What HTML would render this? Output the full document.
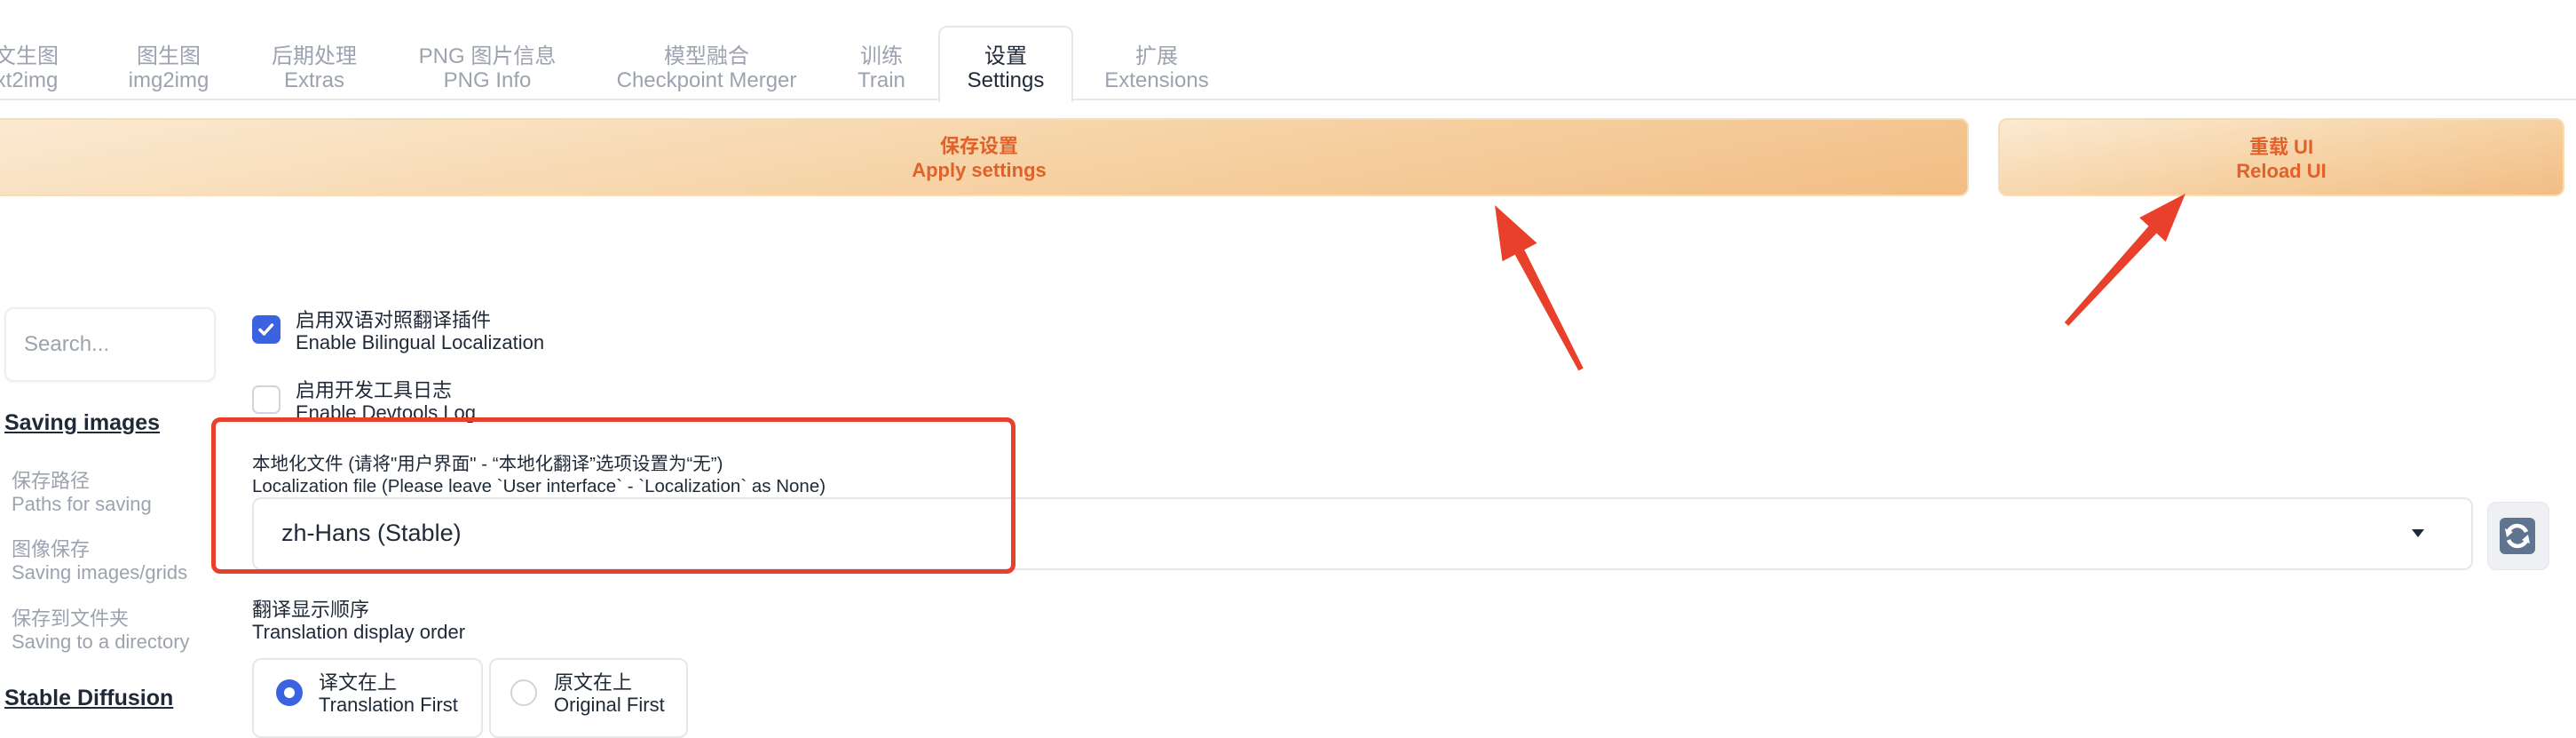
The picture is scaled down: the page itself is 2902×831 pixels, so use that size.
<!DOCTYPE html>
<html><head><meta charset="utf-8"><style>
*{margin:0;padding:0;box-sizing:border-box}
body{width:2902px;height:812px;overflow:hidden;background:#fff;position:relative;font-family:"Liberation Sans","Noto Sans CJK SC",sans-serif;color:#1f2937}
.a{position:absolute;white-space:nowrap}
.tab{position:absolute;top:50px;text-align:center;color:#9ca3af;font-size:24px;line-height:27px;transform:translateX(-50%)}
.btn{position:absolute;border:2px solid #f8dcb4;border-radius:10px;background:linear-gradient(170deg,#fbead2 0%,#f6d2a4 55%,#f2bd84 100%);color:#e0622a;font-weight:bold;font-size:22px;line-height:27px;text-align:center}
.nav{position:absolute;left:13px;color:#9ca3af;font-size:22px;line-height:26px}
.lbl{font-size:22px;line-height:25px;color:#1f2937}
</style></head><body>
<div class="tab" style="left:30px">文生图<br>xt2img</div>
<div class="tab" style="left:190px">图生图<br>img2img</div>
<div class="tab" style="left:354px">后期处理<br>Extras</div>
<div class="tab" style="left:549px">PNG 图片信息<br>PNG Info</div>
<div class="tab" style="left:796px">模型融合<br>Checkpoint Merger</div>
<div class="tab" style="left:993px">训练<br>Train</div>
<div class="a" style="left:1057px;top:29px;width:152px;height:86px;border:2px solid #e5e7eb;border-bottom:none;border-radius:10px 10px 0 0;background:#fff;z-index:2"></div>
<div class="tab" style="left:1133px;color:#1f2937;z-index:3">设置<br>Settings</div>
<div class="tab" style="left:1303px">扩展<br>Extensions</div>
<div class="a" style="left:0;top:111px;width:2902px;height:2px;background:#e5e7eb;z-index:1"></div>
<div class="a" style="left:1059px;top:110px;width:148px;height:4px;background:#fff;z-index:2"></div>

<div class="btn" style="left:-12px;top:133px;width:2230px;height:88px;padding-top:16px">保存设置<br>Apply settings</div>
<div class="btn" style="left:2251px;top:133px;width:638px;height:88px;padding-top:17px">重载 UI<br>Reload UI</div>

<svg class="a" style="left:0;top:0;z-index:5" width="2902" height="812">
<polygon fill="#e8402a" points="1684,231 1731.5,273.8 1717.3,281.2 1783.7,414.6 1778.3,417.4 1706.7,286.8 1692.5,294.2" />
<polygon fill="#e8402a" points="2462,218 2439.8,272.1 2429.4,262.6 2330.2,367 2325.8,363 2420.6,254.6 2410.2,245.1" />
</svg>

<div class="a" style="left:5px;top:346px;width:238px;height:84px;border:2px solid #eceef1;border-radius:10px;box-shadow:0 1px 2px rgba(0,0,0,.05)"></div>
<div class="a" style="left:27px;top:374px;font-size:24px;color:#9ca3af">Search...</div>

<div class="a" style="left:284px;top:355px;width:32px;height:32px;border-radius:7px;background:#3b63e0"></div>
<svg class="a" style="left:284px;top:355px" width="32" height="32"><path d="M9 16.5l4.5 4.5 9-10" stroke="#fff" stroke-width="3.5" fill="none" stroke-linecap="round" stroke-linejoin="round"/></svg>
<div class="a lbl" style="left:333px;top:348px">启用双语对照翻译插件<br>Enable Bilingual Localization</div>

<div class="a" style="left:284px;top:434px;width:32px;height:32px;border-radius:7px;border:2px solid #d1d5db;background:#fff"></div>
<div class="a lbl" style="left:333px;top:427px">启用开发工具日志<br>Enable Devtools Log</div>

<div class="a" style="left:238px;top:476px;width:2560px;height:175px;background:#fff;z-index:3"></div>
<div class="a lbl" style="left:284px;top:510px;font-size:20.5px;z-index:4">本地化文件 (请将"用户界面" - “本地化翻译”选项设置为“无”)<br>Localization file (Please leave `User interface` - `Localization` as None)</div>
<div class="a" style="left:284px;top:560px;width:2502px;height:82px;border:2px solid #e5e7eb;border-radius:10px;background:#fff;z-index:4"></div>
<div class="a" style="left:317px;top:585px;font-size:27px;color:#1f2937;z-index:5">zh-Hans (Stable)</div>
<svg class="a" style="left:2717px;top:596px;z-index:5" width="14" height="10"><polygon points="0,0 14,0 7,9" fill="#1f2937"/></svg>
<div class="a" style="left:238px;top:470px;width:906px;height:176px;border:5px solid #e8402a;border-radius:10px;z-index:6"></div>

<div class="a" style="left:2802px;top:565px;width:70px;height:77px;border-radius:10px;background:#eef0f4;border:1px solid #e5e7eb;z-index:7"></div>
<svg class="a" style="left:2816px;top:583px;z-index:8" width="40" height="41" viewBox="0 0 40 41">
<rect x="0" y="0" width="40" height="41" rx="6" fill="#5e7490"/>
<path d="M30 16a11 11 0 0 0-20-1" stroke="#fff" stroke-width="4.5" fill="none"/>
<polygon points="6,12 15,16 8,22" fill="#fff"/>
<path d="M10 25a11 11 0 0 0 20 1" stroke="#fff" stroke-width="4.5" fill="none"/>
<polygon points="34,29 25,25 32,19" fill="#fff"/>
</svg>

<div class="a" style="left:5px;top:462px;font-size:25px;font-weight:bold;text-decoration:underline;color:#1f2937">Saving images</div>
<div class="nav" style="top:529px">保存路径<br>Paths for saving</div>
<div class="nav" style="top:606px">图像保存<br>Saving images/grids</div>
<div class="nav" style="top:684px">保存到文件夹<br>Saving to a directory</div>
<div class="a" style="left:5px;top:772px;font-size:25px;font-weight:bold;text-decoration:underline;color:#1f2937">Stable Diffusion</div>

<div class="a lbl" style="left:284px;top:674px">翻译显示顺序<br>Translation display order</div>
<div class="a" style="left:284px;top:741px;width:260px;height:90px;border:2px solid #e5e7eb;border-radius:10px"></div>
<div class="a" style="left:551px;top:741px;width:224px;height:90px;border:2px solid #e5e7eb;border-radius:10px"></div>
<div class="a" style="left:311px;top:765px;width:30px;height:30px;border-radius:50%;background:#3b63e0"></div>
<div class="a" style="left:320px;top:774px;width:12px;height:12px;border-radius:50%;background:#fff"></div>
<div class="a lbl" style="left:359px;top:756px">译文在上<br>Translation First</div>
<div class="a" style="left:575px;top:765px;width:30px;height:30px;border-radius:50%;border:2px solid #d1d5db"></div>
<div class="a lbl" style="left:624px;top:756px">原文在上<br>Original First</div>
</body></html>
